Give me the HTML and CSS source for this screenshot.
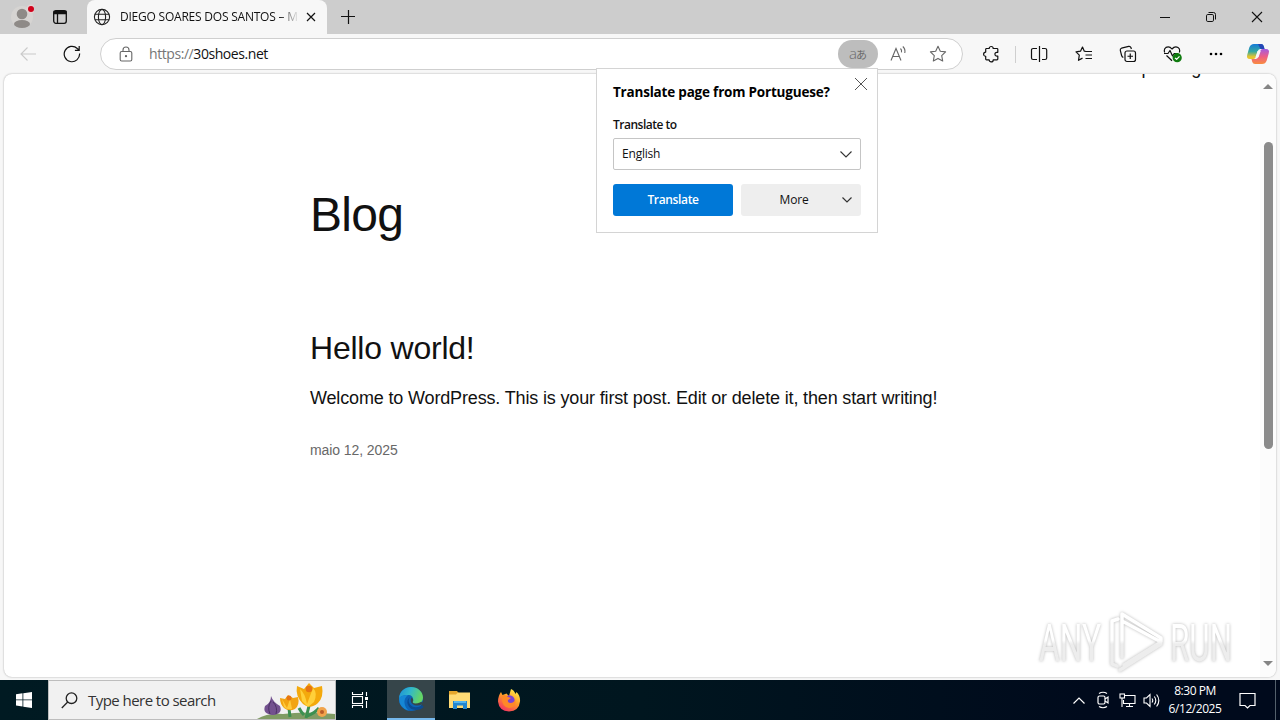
FILE: index.html
```html
<!DOCTYPE html>
<html lang="en">

<head>
    <meta charset="UTF-8" />
    <title>DIEGO SOARES DOS SANTOS</title>
    <link rel="stylesheet" href="styles.css">
</head>

<body>
    <!-- Tab strip -->
    <header class="titlebar">
        <div class="profile">
            <svg width="24" height="26" viewBox="0 0 24 26">
                <circle cx="12" cy="13" r="11" fill="#d6d4d2" />
                <circle cx="12" cy="10" r="5.3" fill="#8e8a87" />
                <ellipse cx="12" cy="20" rx="8" ry="4" fill="#8e8a87" />
                <circle cx="21" cy="5" r="4.5" fill="#e3d2d2" />
                <circle cx="21" cy="5" r="3" fill="#d0021b" />
            </svg>
        </div>
        <div class="tab-actions">
            <svg width="16" height="16" viewBox="0 0 16 16" fill="none" stroke="#111" stroke-width="1.3">
                <rect x="1.7" y="1.7" width="12.6" height="12.6" rx="2.2" />
                <path d="M5.500 5v9" />
                <path d="M2 2.500h12v2H2z" fill="#111" />
            </svg>
        </div>
        <div class="tab">
            <svg width="18" height="18" viewBox="0 0 18 18" fill="none" stroke="#222" stroke-width="1.1">
                <circle cx="9" cy="9" r="7.6" />
                <ellipse cx="9" cy="9" rx="3.6" ry="7.6" />
                <path d="M2 6.3h14M2 11.7h14" />
            </svg>
            <span class="tab-title">DIEGO SOARES DOS SANTOS – M</span>
            <svg width="10" height="10" viewBox="0 0 10 10" stroke="#111" stroke-width="1.2">
                <path d="M1 1l8 8M9 1L1 9" />
            </svg>
        </div>
        <div class="new-tab">
            <svg width="14" height="14" viewBox="0 0 14 14" stroke="#111" stroke-width="1.2">
                <path d="M7.500 0v14M0 6.500h14" />
            </svg>
        </div>
        <div class="window-buttons">
            <div><svg width="12" height="12" viewBox="0 0 12 12" stroke="#111"><path d="M1 6.5h10" /></svg></div>
            <div><svg width="12" height="12" viewBox="0 0 12 12" fill="none" stroke="#111">
                    <rect x="1.5" y="3.500" width="7" height="7" rx="1.3" />
                    <path d="M3.5 1.500h5Q10.500 1.500 10.500 3.500v5" />
                </svg></div>
            <div><svg width="12" height="12" viewBox="0 0 12 12" stroke="#111" stroke-width="1.1"><path d="M1 1l10 10M11 1L1 11" /></svg></div>
        </div>
    </header>

    <!-- Toolbar -->
    <nav class="toolbar">
        <div class="tool">
            <svg width="18" height="18" viewBox="0 0 18 18" fill="none" stroke="#cacaca" stroke-width="1.1"><path d="M17 9H2M8.500 2.500L2 9l6.500 6.500" /></svg>
        </div>
        <div class="tool">
            <svg width="18" height="18" viewBox="0 0 18 18" fill="none" stroke="#111" stroke-width="1.2"><path d="M16.600 8.500a7.700 7.700 0 1 1-2.300-5L16 5M16.200 1v4.300h-4.300" /></svg>
        </div>
        <div class="address">
            <svg class="lock" width="14" height="16" viewBox="0 0 14 16" fill="none" stroke="#666" stroke-width="1.1">
                <rect x="1.200" y="5.500" width="11.600" height="9.500" rx="1.500" />
                <path d="M4 5.500V4a3 3 0 0 1 6 0v1.500" />
                <circle cx="7" cy="10.200" r=".6" fill="#666" />
            </svg>
            <span class="url"><span>https://</span>30shoes.net</span>
            <div class="bar-icon active"><span class="latin">a</span><span class="kana">あ</span></div>
            <div class="bar-icon">
                <svg width="18" height="18" viewBox="0 0 18 18" fill="none" stroke="#666" stroke-width="1.1">
                    <path d="M2 15.500L7 3.500l5 12M3.800 11.500h6.500M11.500 3.500q1.500 1.500 1 3.800M13.800 1.500q2.800 2.500 2 6.500" />
                </svg>
            </div>
            <div class="bar-icon">
                <svg width="18" height="18" viewBox="0 0 18 18" fill="none" stroke="#666" stroke-width="1.1" stroke-linejoin="round">
                    <path d="M9 1.300l2.300 4.900 5.300.7-3.900 3.700 1 5.400L9 13.400 4.300 16l1-5.400L1.400 6.900l5.300-.7z" />
                </svg>
            </div>
        </div>
        <div class="tool extensions">
            <svg width="18" height="18" viewBox="0 0 18 18" fill="none" stroke="#111" stroke-width="1.200" stroke-linejoin="round">
                <path d="M4 3.500h3.200a2 2 0 0 1 4 0h3.800q.8 0 .8.800v3h-1a1.900 1.900 0 0 0 0 3.800h1v3q0 .8-.8.800h-3.800a2 2 0 0 1-4 0H4.500q-.8 0-.8-.8v-2.800a2.100 2.100 0 0 1 0-4.200V4.300q0-.8.800-.8" />
            </svg>
        </div>
        <div class="separator"></div>
        <div class="tool">
            <svg width="18" height="18" viewBox="0 0 18 18" fill="none" stroke="#111" stroke-width="1.200">
                <path d="M9.500 1v16M7 3.500H3.200Q1.500 3.500 1.500 5v8q0 1.500 1.700 1.500H7M12 3.500h3q1.700 0 1.700 1.500v8q0 1.500-1.700 1.500h-3" />
            </svg>
        </div>
        <div class="tool favorites">
            <svg width="18" height="18" viewBox="0 0 18 18" fill="none" stroke="#111" stroke-width="1.200" stroke-linejoin="round">
                <path d="M11 6.500l-1.700-.3L7.500 2 5.500 6.200 1 6.800l3.300 3.300-.8 5.200 4-2.200M10.500 6.500H17M10.500 10H17M10.500 13.500H17" />
            </svg>
        </div>
        <div class="tool">
            <svg width="18" height="18" viewBox="0 0 18 18" fill="none" stroke="#111" stroke-width="1.200" stroke-linejoin="round">
                <rect x="6" y="6" width="10.500" height="10.500" rx="2" />
                <path d="M11.250 8.500v5.500M8.500 11.250H14M4.300 12.500Q3 12 2.600 10.500L1.300 5.300Q1 3.700 2.500 3.200L9.700 1.400Q11.300 1.100 11.900 2.500L12.400 4" />
            </svg>
        </div>
        <div class="tool">
            <svg width="20" height="18" viewBox="0 0 20 18" fill="none" stroke="#111" stroke-width="1.200" stroke-linejoin="round">
                <path d="M2.700 7.500Q1.500 4 4 2.400 7.300.6 10 4 12.800.6 16 2.400 18.500 4 17.300 7.500M2 8.500h4l2-3 2.500 5.500 1.700-2.500H16M4.500 10.500l5.500 5.300" />
                <circle cx="15.200" cy="12.700" r="4.600" fill="#107c10" stroke="none" />
                <path d="M13 12.800l1.600 1.600 2.900-3" stroke="#fff" />
            </svg>
        </div>
        <div class="tool">
            <svg width="16" height="4" viewBox="0 0 16 4"><circle cx="3" cy="2" r="1.300" /><circle cx="8" cy="2" r="1.300" /><circle cx="13" cy="2" r="1.300" /></svg>
        </div>
        <div class="tool copilot">
            <svg width="24" height="22" viewBox="0 0 24 22">
                <defs>
                    <linearGradient id="cpLeft" x1="0" y1="0" x2="0" y2="1">
                        <stop offset="0" stop-color="#1479d8" />
                        <stop offset=".5" stop-color="#35a9a0" />
                        <stop offset=".85" stop-color="#e6c52f" />
                    </linearGradient>
                    <linearGradient id="cpRight" x1="0" y1="0" x2="0" y2="1">
                        <stop offset="0" stop-color="#a35be0" />
                        <stop offset=".5" stop-color="#ed5d87" />
                        <stop offset="1" stop-color="#f98c3e" />
                    </linearGradient>
                </defs>
                <path d="M8 1h7q2 0 2.700 2l.8 3h-4q-2 0-2.700 2l-2 6q-.7 2-2.500 2H4q-4 0-2.700-4.500l2-7Q4.500 1 8 1z" fill="url(#cpLeft)" />
                <path d="M16 21H9q-2 0-2.700-2l-.8-3h4q2 0 2.700-2l2-6q.7-2 2.500-2H20q4 0 2.700 4.500l-2 7Q19.500 21 16 21z" fill="url(#cpRight)" />
                <path d="M12 1h3q2 0 2.700 2l.8 3h-4z" fill="#2446b5" />
                <path d="M11.500 8h3.200l-2.200 6.200h-3z" fill="#f7f7f7" />
            </svg>
        </div>
    </nav>

    <!-- Web page -->
    <main class="viewport">
        <div class="page">
            <div class="site-nav"><span>Sample Page</span></div>
            <article class="blog">
                <h1>Blog</h1>
                <h2>Hello world!</h2>
                <p>Welcome to WordPress. This is your first post. Edit or delete it, then start writing!</p>
                <time>maio 12, 2025</time>
            </article>
        </div>
        <div class="scrollbar">
            <svg width="10" height="5" viewBox="0 0 10 5"><path d="M0 5l5-5 5 5z" fill="#858585" /></svg>
            <div class="thumb"></div>
            <svg width="10" height="5" viewBox="0 0 10 5"><path d="M0 0h10L5 5z" fill="#858585" /></svg>
        </div>
    </main>

    <!-- Translate prompt -->
    <section class="popup">
        <svg class="popup-close" width="12" height="12" viewBox="0 0 12 12" stroke="#555" stroke-width="1"><path d="M0 0l12 12M12 0L0 12" /></svg>
        <h3>Translate page from Portuguese?</h3>
        <label>Translate to</label>
        <div class="select">
            <span>English</span>
            <svg width="12" height="7" viewBox="0 0 12 7" fill="none" stroke="#333" stroke-width="1.100"><path d="M.5.500L6 6 11.500.5" /></svg>
        </div>
        <div class="buttons">
            <div class="btn primary"><span>Translate</span></div>
            <div class="btn more">
                <span>More</span>
                <svg width="10" height="6" viewBox="0 0 10 6" fill="none" stroke="#333" stroke-width="1.200"><path d="M.5.500L5 5 9.500.5" /></svg>
            </div>
        </div>
    </section>

    <!-- Watermark -->
    <svg class="watermark" width="212" height="70" viewBox="0 0 212 70">
        <defs>
            <linearGradient id="fade" gradientUnits="userSpaceOnUse" x1="0" y1="33" x2="0" y2="37">
                <stop offset="0" stop-color="#fff" />
                <stop offset="1" stop-color="#ededed" />
            </linearGradient>
        </defs>
        <text x="5" y="54" textLength="62" lengthAdjust="spacingAndGlyphs">ANY</text>
        <text x="136" y="54" textLength="62" lengthAdjust="spacingAndGlyphs">RUN</text>
        <g fill="none" stroke-linejoin="round" stroke-linecap="round" stroke="url(#fade)" stroke-width="3.500">
            <path d="M84 12l-6 2v43l5 2" />
            <path d="M88 50V7l39 24v4L90 58M90 15l37 20M86 63l41-26" />
        </g>
    </svg>

    <!-- Taskbar -->
    <footer class="taskbar">
        <div class="start">
            <svg width="16" height="16" viewBox="0 0 16 16" fill="#fff"><path d="M0 2.200l6.500-.9v6.200H0zM7.300 1.200L16 0v7.500H7.300zM0 8.300h6.500v6.200L0 13.600zM7.300 8.300H16V16l-8.700-1.200z" /></svg>
        </div>
        <div class="search">
            <svg width="17" height="17" viewBox="0 0 17 17" fill="none" stroke="#222" stroke-width="1.300"><circle cx="10.500" cy="6.200" r="5.300" /><path d="M6.700 10L.8 16" /></svg>
            <span>Type here to search</span>
            <svg class="flowers" width="80" height="38" viewBox="0 0 80 38">
                <path d="M2 38Q12 32 28 33 50 30 80 33v5z" fill="#809c64" />
                <path d="M35 36q-1-8-1-10M51 37q2-8 3-12M52 35q8-3 12-8M49 34q-3-3-5-7" stroke="#3c9050" stroke-width="3" fill="none" />
                <g transform="translate(3 -2)">
                    <path d="M13 17q2 6 9 10 3 8-7 9-11-1-8-9 6-3 6-10z" fill="#73518f" />
                    <path d="M13 22q-4 6-1 13M15 23q5 5 3 12" stroke="#4c3265" fill="none" />
                </g>
                <path d="M25 17l5 1 3-4 5 3 5-1q2 8-3 12-6 3-11-1-4-4-4-10z" fill="#f2a413" />
                <path d="M27 18l5 9 3-9 2 10q-5 1-8-2z" fill="#ffcb3c" />
                <circle cx="34" cy="17" r="2.500" fill="#e67512" />
                <path d="M42 5l7 3 5-6 5 5 8-2q2 11-4 17-8 7-15 1-8-8-6-18z" fill="#f4a90c" />
                <path d="M45 8q5 4 7 15L58 7q5 5 1 14l-6 5-6-6z" fill="#ffd03a" />
                <circle cx="54" cy="8" r="3.300" fill="#e67512" />
                <circle cx="67" cy="31" r="5" fill="#f1a44b" />
                <circle cx="67" cy="31" r="2" fill="#b95c27" />
            </svg>
        </div>
        <div class="app task-view">
            <svg width="18" height="16" viewBox="0 0 18 16" fill="none" stroke="#fff" stroke-width="1.100">
                <path d="M1.500 0v2.500h10V0M1.500 16v-2.500h10V16M15.500 0v4M15.500 9v7" />
                <rect x="1.500" y="4.500" width="10" height="7" />
                <path d="M14 5h3v3h-3z" fill="#fff" stroke="none" />
            </svg>
        </div>
        <div class="app edge">
            <svg width="26" height="26" viewBox="0 0 26 26">
                <defs>
                    <linearGradient id="edgeTop" x1="0" y1="0" x2="1" y2=".3">
                        <stop offset="0" stop-color="#1c8ed8" />
                        <stop offset=".5" stop-color="#32b8ca" />
                        <stop offset="1" stop-color="#65d564" />
                    </linearGradient>
                </defs>
                <circle cx="13" cy="13" r="12" fill="#0c63b7" />
                <path d="M1 12.500C1.500 5 7 1 13 1c7 0 12 5 12 10.500 0 4.500-3.500 6.500-7 6.500-3 0-4-1-3.500-2 1.500-2.500.5-6.500-3.500-7-5-.5-9 1.500-10 3.500z" fill="url(#edgeTop)" />
                <path d="M1 12.500q2-4 9-3.500-4 3-3.500 8 .5 5 4.500 7.800Q1 22 1 12.500z" fill="#1687d5" />
                <path d="M12 11q-3 4 .5 8t10.500 1l1-1 2 2-3 2q-10 3-13-4-2-5 2-8z" fill="#0b4b91" />
                <path d="M13.500 11.500q-2 4 1 6.500 4 3 10 0l1.500 4V17l-3-1q-7 3-8.500 0 2-2-1-4.500z" fill="#36454a" />
            </svg>
        </div>
        <div class="app">
            <svg width="24" height="20" viewBox="0 0 24 20">
                <path d="M1 1h8l2 2.500h11V18H1z" fill="#e5a72d" />
                <path d="M1 4.500h7l2-2h12V18H1z" fill="#ffdb75" />
                <path d="M5 11h14v8h-4v-3.500H9V19H5z" fill="#2386cf" />
                <path d="M6 11h12v2H6z" fill="#54b5ee" />
            </svg>
        </div>
        <div class="app">
            <svg width="24" height="24" viewBox="0 0 24 24">
                <defs>
                    <linearGradient id="fox" x1=".8" y1="0" x2=".2" y2="1">
                        <stop offset="0" stop-color="#fff04d" />
                        <stop offset=".45" stop-color="#ff9b26" />
                        <stop offset="1" stop-color="#f32b67" />
                    </linearGradient>
                </defs>
                <path d="M4 4l1.500 3 4-1.500L12 8l2-7q3 1 4.500 5l1-2q4 4 3.500 9.500Q22 23 12 23.500 2 23 1 13.500 1 8 4 4z" fill="url(#fox)" />
                <circle cx="12.500" cy="12.500" r="5.200" fill="#7a42d4" />
                <path d="M5 8q4-2 6 1l3 1-3 2q-1 3 3 3 4-1 4-4 2 8-6 9-8-1-7-12z" fill="#ff8827" />
            </svg>
        </div>
        <div class="tray">
            <div><svg width="12" height="7" viewBox="0 0 12 7" fill="none" stroke="#fff" stroke-width="1.200"><path d="M.5 6.500L6 1l5.500 5.500" /></svg></div>
            <div><svg width="14" height="18" viewBox="0 0 14 18" fill="none" stroke="#fff" stroke-width="1.200">
                    <rect x="2" y="5" width="7" height="8" rx="1.500" />
                    <path d="M9 8l3-2v6l-3-2M3 2.500q4-2.500 8 0M3 15.500q4 2.500 8 0" />
                </svg></div>
            <div><svg width="17" height="15" viewBox="0 0 17 15" fill="none" stroke="#fff" stroke-width="1.100">
                    <path d="M5.500 2.500H16v8H4.500V7M10.500 10.500v3M7 13.500h7" />
                    <rect x="1" y="1" width="4.500" height="4" />
                    <path d="M3 5v9" />
                </svg></div>
            <div><svg width="17" height="15" viewBox="0 0 17 15" fill="none" stroke="#fff" stroke-width="1.100">
                    <path d="M1 5h2.500L7 1.500v12L3.500 10H1zM9 5.500q1.500 2 0 4M11.300 3.500q3 4 0 8M13.600 1.500q4.500 6 0 12" />
                </svg></div>
            <div class="clock"><span>8:30 PM</span><span>6/12/2025</span></div>
            <div class="notice"><svg width="17" height="17" viewBox="0 0 17 17" fill="none" stroke="#fff" stroke-width="1.200"><path d="M1 1.500h15v12h-5l-2.500 2.500L6 13.500H1z" /></svg></div>
            <div class="show-desktop"></div>
        </div>
    </footer>
</body>

</html>
```
FILE: styles.css
```css
* {
    box-sizing: border-box;
}

body {
    margin: 0;
    width: 1280px;
    height: 720px;
    display: flex;
    flex-direction: column;
    overflow: hidden;
    position: relative;
    background: #f7f7f7;
    font-family: "Open Sans", "Noto Sans", sans-serif;
    color: #111;
}

svg {
    display: block;
    flex-shrink: 0;
}

span,
h3,
label {
    white-space: nowrap;
}

/* Tab strip */
.titlebar {
    height: 34px;
    display: flex;
    background: #cdcdcd;
}

.profile,
.tab-actions,
.new-tab,
.window-buttons div,
.tool,
.bar-icon {
    display: flex;
    align-items: center;
    justify-content: center;
}

.profile {
    width: 44px;
}

.tab-actions {
    width: 32px;
}

.tab {
    width: 240px;
    margin-left: 11px;
    padding: 0 11px 0 6px;
    display: flex;
    align-items: center;
    background: #f7f7f7;
    border-radius: 8px 8px 0 0;
}

.tab-title {
    flex: 1;
    margin: 0 8px 0 9px;
    overflow: hidden;
    font-size: 12px;
    line-height: 16px;
    letter-spacing: -0.22px;
    -webkit-mask-image: linear-gradient(to right, #000 160px, transparent 179px);
    mask-image: linear-gradient(to right, #000 160px, transparent 179px);
}

.new-tab {
    width: 42px;
}

.window-buttons {
    display: flex;
    margin-left: auto;
}

.window-buttons div {
    width: 46px;
}

/* Toolbar */
.toolbar {
    height: 40px;
    padding-left: 6px;
    display: flex;
    align-items: center;
}

.tool {
    width: 44px;
    height: 40px;
    flex-shrink: 0;
}

.address {
    width: 863px;
    height: 32px;
    margin-left: 6px;
    padding: 0 4px 0 18px;
    display: flex;
    align-items: center;
    background: #fff;
    border: 1px solid #cfcfcf;
    border-radius: 16px;
}

.url {
    flex: 1;
    margin-left: 16px;
    padding-bottom: 1px;
    font-size: 14px;
    letter-spacing: -0.43px;
}

.url span {
    color: #767676;
}

.bar-icon {
    width: 40px;
    height: 28px;
}

.bar-icon.active {
    background: #bdbdbd;
    border-radius: 14px;
    color: #6c6c6c;
    line-height: 16px;
}

.latin {
    font-size: 15px;
    font-weight: 300;
    padding-bottom: 2px;
}

.kana {
    font-family: "Noto Sans CJK JP", sans-serif;
    font-size: 11px;
    margin-left: -1px;
}

.extensions {
    margin-left: 6px;
}

.separator {
    width: 1px;
    height: 17px;
    margin: 0 1px 0 2px;
    background: #cfcfcf;
}

.favorites {
    margin-left: 1px;
}

.tool.copilot {
    width: 40px;
}

/* Page area */
.viewport {
    height: 603px;
    margin: 0 4px;
    display: flex;
    background: #fff;
    border-radius: 8px;
    overflow: hidden;
    box-shadow: 0 0 2px rgba(0, 0, 0, 0.35);
}

.page {
    flex: 1;
    font-family: "Liberation Sans", Arial, sans-serif;
}

.site-nav {
    height: 4px;
    padding-right: 49px;
    display: flex;
    justify-content: flex-end;
    align-items: flex-end;
    font-size: 18px;
    line-height: 20px;
    letter-spacing: -0.18px;
}

.blog {
    width: 645px;
    margin: 109px 0 0 306px;
}

.blog h1 {
    margin: 0;
    font-size: 48px;
    font-weight: 400;
    line-height: 56px;
    letter-spacing: -0.7px;
}

.blog h2 {
    margin: 86px 0 0;
    font-size: 32px;
    font-weight: 400;
    line-height: 38px;
    letter-spacing: -0.22px;
}

.blog p {
    margin: 18px 0 0;
    font-size: 18px;
    line-height: 26px;
    letter-spacing: -0.153px;
    white-space: nowrap;
}

.blog time {
    display: block;
    margin-top: 29px;
    font-size: 14px;
    line-height: 20px;
    letter-spacing: -0.08px;
    color: #686868;
}

.scrollbar {
    width: 16px;
    padding: 10px 0 11px;
    display: flex;
    flex-direction: column;
    align-items: center;
    background: #fcfcfc;
}

.thumb {
    width: 9px;
    height: 307px;
    margin: 53px 0 auto;
    background: #8b8b8b;
    border-radius: 5px;
}

/* Translate prompt, hangs under the address bar */
.popup {
    position: absolute;
    left: 596px;
    top: 68px;
    width: 282px;
    height: 165px;
    padding: 13px 16px;
    background: #fff;
    border: 1px solid #d4d4d4;
    font-size: 12px;
}

.popup-close {
    position: absolute;
    top: 9px;
    right: 10px;
}

.popup h3 {
    margin: 0;
    font-size: 13.5px;
    font-weight: 700;
    line-height: 20px;
    letter-spacing: -0.2px;
    color: #000;
}

.popup label {
    display: block;
    margin-top: 15px;
    font-weight: 600;
    line-height: 16px;
    letter-spacing: -0.5px;
}

.select {
    height: 32px;
    margin-top: 5px;
    padding: 0 8px;
    display: flex;
    align-items: center;
    justify-content: space-between;
    border: 1px solid #c5c5c5;
    border-radius: 2px;
    letter-spacing: -0.2px;
}

.select span,
.btn span {
    padding-bottom: 1px;
}

.buttons {
    display: flex;
    gap: 8px;
    margin-top: 14px;
}

.btn {
    width: 120px;
    height: 32px;
    display: flex;
    align-items: center;
    justify-content: center;
    border-radius: 3px;
}

.primary {
    background: #0078d7;
    color: #fff;
    font-weight: 700;
    letter-spacing: -0.8px;
}

.primary span {
    font-weight: 600;
    letter-spacing: -0.35px;
}

.more {
    background: #eee;
    padding-right: 9px;
}

.more span {
    flex: 1;
    padding-left: 5px;
    text-align: center;
    letter-spacing: -0.2px;
}

/* Watermark */
.watermark {
    position: absolute;
    left: 1034px;
    top: 607px;
    filter: drop-shadow(0 0 1.5px rgba(0, 0, 0, 0.28));
}

.watermark text {
    font-family: Roboto, sans-serif;
    font-size: 52px;
    fill: url(#fade);
}

/* Taskbar */
.taskbar {
    height: 40px;
    margin-top: 3px;
    display: flex;
    background: linear-gradient(to right, #001a22, #00161f 50%, #000a1c 85%);
}

.start,
.app,
.tray div {
    display: flex;
    align-items: center;
    justify-content: center;
}

.start {
    width: 48px;
}

.search {
    width: 288px;
    padding-left: 12px;
    display: flex;
    align-items: center;
    background: #f1f1f1;
    border: 1px solid #bdbdbd;
    font-size: 15px;
    color: #333;
}

.search span {
    margin-left: 10px;
    letter-spacing: -0.55px;
}

.flowers {
    margin-left: auto;
}

.app {
    width: 48px;
    margin-right: 1px;
}

.task-view {
    margin-right: 3px;
}

.edge {
    background: #36454a;
    border-bottom: 2px solid #76b9ed;
}

.tray {
    margin-left: auto;
    display: flex;
    color: #fff;
}

.tray div {
    width: 24px;
}

.tray .clock {
    width: 64px;
    flex-direction: column;
    font-size: 12px;
    line-height: 18px;
    letter-spacing: -0.45px;
}

.tray .notice {
    width: 40px;
}

.tray .show-desktop {
    width: 5px;
    margin-left: 8px;
    border-left: 1px solid #53606b;
}
```
